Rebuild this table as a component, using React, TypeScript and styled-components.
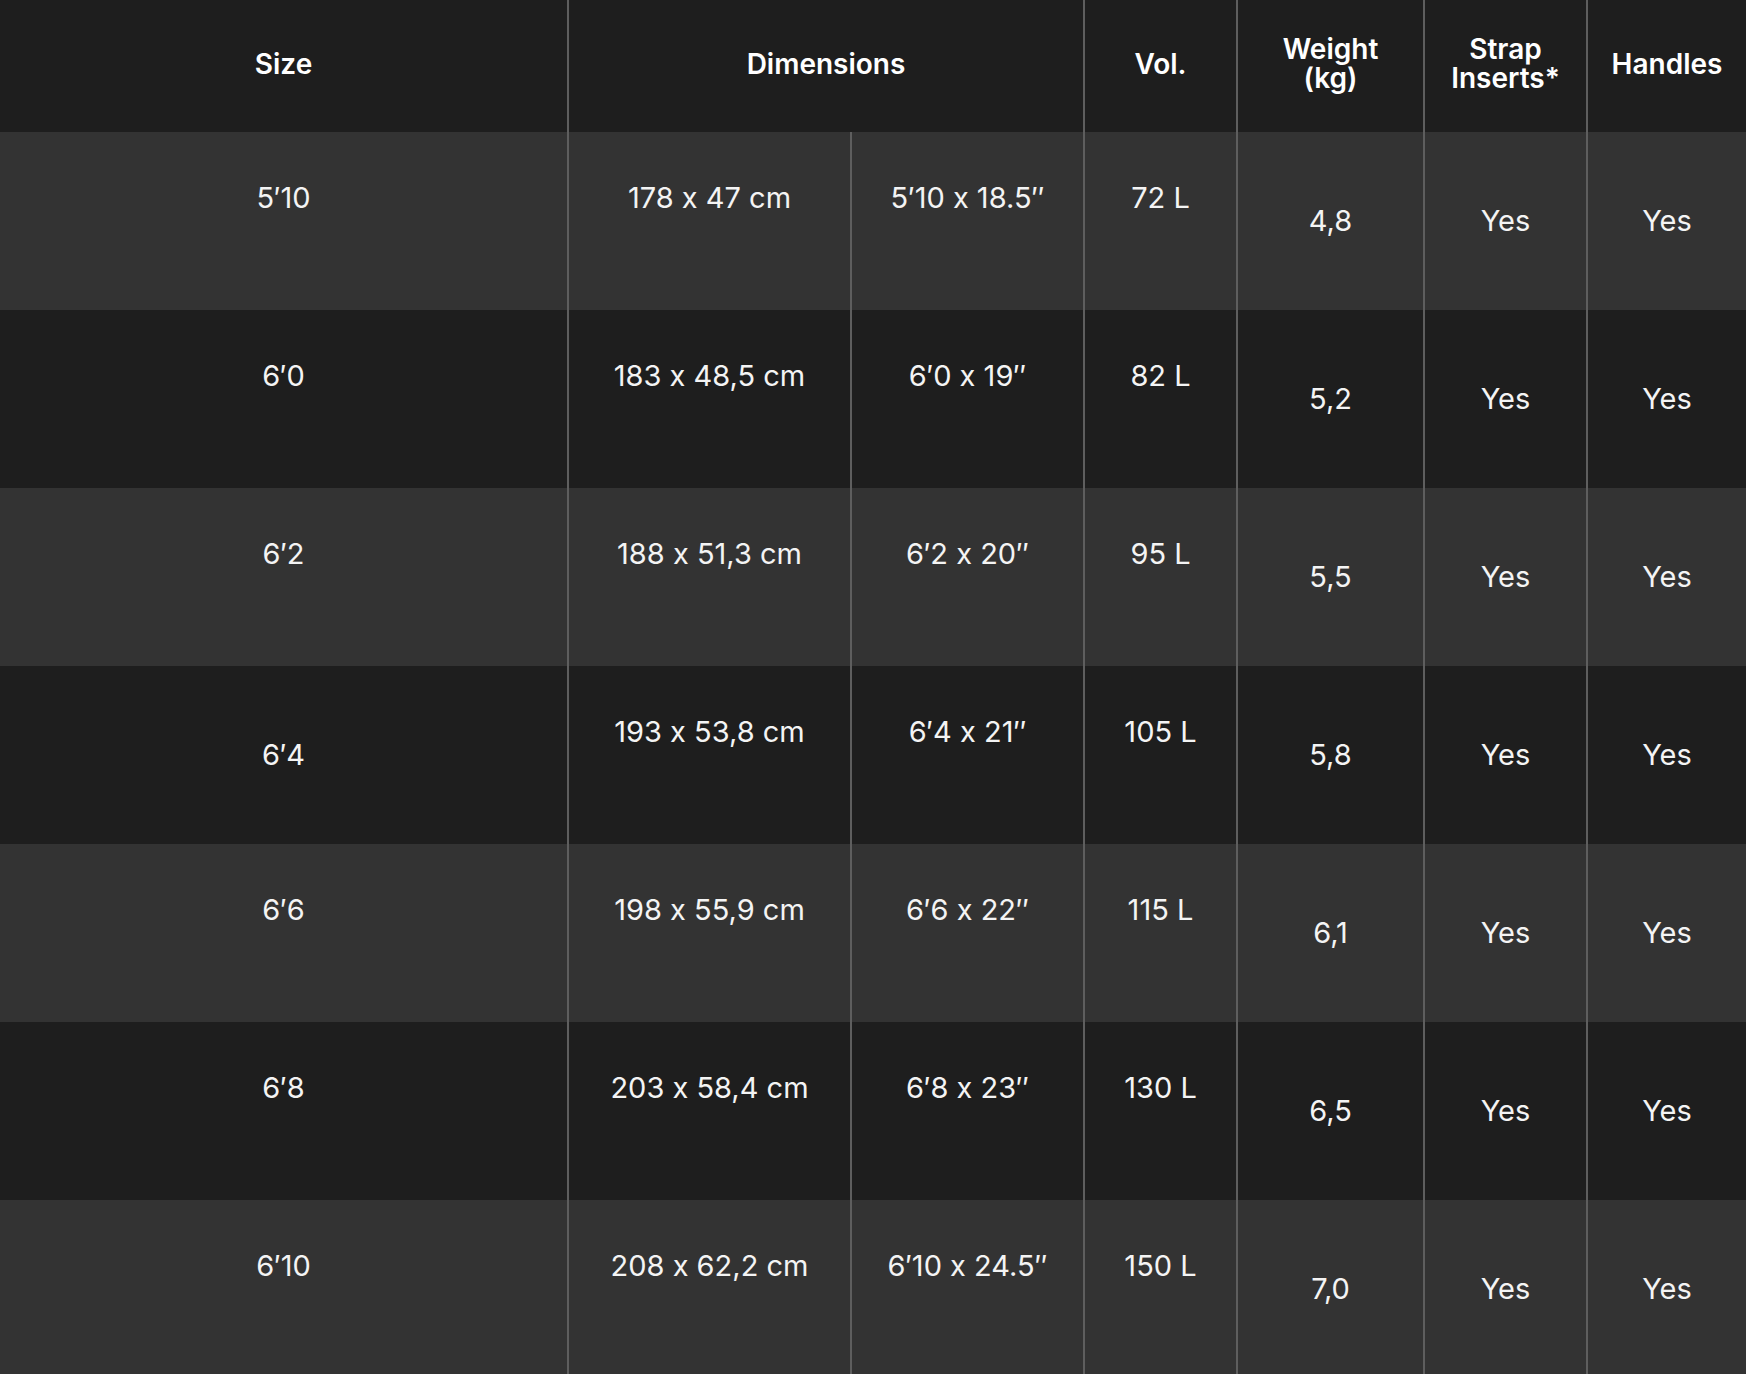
import React from 'react';
import styled, { createGlobalStyle } from 'styled-components';

const GlobalStyle = createGlobalStyle`
  html, body {
    margin: 0;
    padding: 0;
    background: #1e1e1e;
  }
  body {
    font-family: Inter, "Noto Sans", "Liberation Sans", sans-serif;
    font-feature-settings: "calt" 0;
    color: #f4f4f4;
  }
`;

type Row = {
  size: string;
  metric: string;
  imperial: string;
  vol: string;
  weight: string;
  straps: string;
  handles: string;
  sizeMiddle?: boolean;
};

const rows: Row[] = [
  { size: '5′10', metric: '178 x 47 cm', imperial: '5′10 x 18.5′′', vol: '72 L', weight: '4,8', straps: 'Yes', handles: 'Yes' },
  { size: '6′0', metric: '183 x 48,5 cm', imperial: '6′0 x 19′′', vol: '82 L', weight: '5,2', straps: 'Yes', handles: 'Yes' },
  { size: '6′2', metric: '188 x 51,3 cm', imperial: '6′2 x 20′′', vol: '95 L', weight: '5,5', straps: 'Yes', handles: 'Yes' },
  { size: '6′4', metric: '193 x 53,8 cm', imperial: '6′4 x 21′′', vol: '105 L', weight: '5,8', straps: 'Yes', handles: 'Yes', sizeMiddle: true },
  { size: '6′6', metric: '198 x 55,9 cm', imperial: '6′6 x 22′′', vol: '115 L', weight: '6,1', straps: 'Yes', handles: 'Yes' },
  { size: '6′8', metric: '203 x 58,4 cm', imperial: '6′8 x 23′′', vol: '130 L', weight: '6,5', straps: 'Yes', handles: 'Yes' },
  { size: '6′10', metric: '208 x 62,2 cm', imperial: '6′10 x 24.5′′', vol: '150 L', weight: '7,0', straps: 'Yes', handles: 'Yes' },
];

const widths = [568, 283, 233, 153, 187, 163, 159];

export default function App() {
  return (
    <>
      <GlobalStyle />
      <Table>
        <colgroup>
          {widths.map((w, i) => (
            <col key={i} style={{ width: w }} />
          ))}
        </colgroup>
        <thead>
          <HeadRow>
            <Th>Size</Th>
            <Th colSpan={2}>Dimensions</Th>
            <Th>Vol.</Th>
            <Th>
              Weight
              <br />
              (kg)
            </Th>
            <Th>
              Strap
              <br />
              Inserts*
            </Th>
            <Th>Handles</Th>
          </HeadRow>
        </thead>
        <tbody>
          {rows.map((r, i) => (
            <BodyRow key={r.size} $light={i % 2 === 0}>
              <Td $align={r.sizeMiddle ? 'middle' : 'top'}>{r.size}</Td>
              <Td $align="top">{r.metric}</Td>
              <Td $align="top">{r.imperial}</Td>
              <Td $align="top">{r.vol}</Td>
              <Td $align="middle">{r.weight}</Td>
              <Td $align="middle">{r.straps}</Td>
              <Td $align="middle">{r.handles}</Td>
            </BodyRow>
          ))}
        </tbody>
      </Table>
    </>
  );
}

const Table = styled.table`
  width: 1746px;
  table-layout: fixed;
  border-collapse: collapse;
  border-spacing: 0;
`;

const HeadRow = styled.tr`
  height: 132px;
  background: #1e1e1e;
`;

const Th = styled.th`
  padding: 0 8px 4px;
  font-size: 28px;
  font-weight: 600;
  line-height: 29px;
  text-align: center;
  vertical-align: middle;
  color: #ffffff;
  border-left: 2px solid #5e5e5e;

  &:first-child {
    border-left: none;
  }
`;

const BodyRow = styled.tr<{ $light: boolean }>`
  height: 178px;
  background: ${(p) => (p.$light ? '#333333' : '#1e1e1e')};
`;

const Td = styled.td<{ $align: 'top' | 'middle' }>`
  padding: ${(p) => (p.$align === 'top' ? '48px 4px 0' : '0 4px')};
  font-size: 29px;
  font-weight: 400;
  line-height: 36px;
  text-align: center;
  vertical-align: ${(p) => p.$align};
  white-space: nowrap;
  border-left: 2px solid #5e5e5e;

  &:first-child {
    border-left: none;
  }
`;
